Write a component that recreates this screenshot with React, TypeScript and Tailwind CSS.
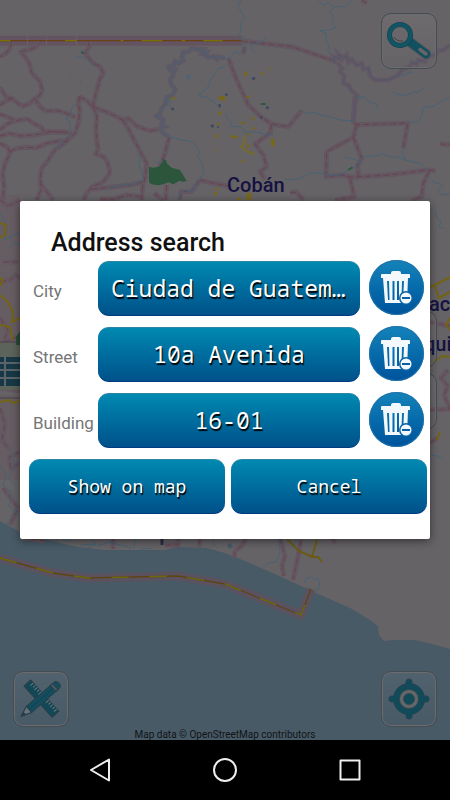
import React from "react";

/* Highways: drawn once as a wide soft casing and once as a dashed centre line. */
const northWestRoads = [
  "M0 408 L30 400 L60 408 L110 404 L150 396 L190 395 L215 400",
  "M35 123 L30 145 L18 160 L0 170",
  "M125 123 L110 138 L95 147 L62 155 L75 170 L88 190 L95 218 L120 245 L127 270 L118 288 L105 295 L90 310 L70 318 L55 312 L38 296 L20 292 L0 262",
  "M0 315 L20 302 L38 296",
  "M105 295 L118 318 L135 333 L170 332 L200 340 L225 352",
  "M0 342 L25 352 L45 362 L82 357 L105 372 L125 382 L130 393 L170 395 L200 398",
  "M0 390 L20 372 L45 362",
  "M0 430 L20 440 L30 455 L25 470 L15 490 L8 520 L12 560 L8 600",
  "M30 455 L50 445 L80 442 L110 443 L140 430 L180 422 L200 425 L170 445 L155 462 L145 480 L125 505 L120 535 L125 565 L110 600",
  "M120 550 L140 575 L160 600",
  "M238 290 L235 315 L240 330 L235 370 L225 400 L190 430",
  "M265 123 L268 140 L255 160 L280 190 L300 200 L310 220 L300 235 L288 280 L278 320",
  "M238 290 L260 302 L278 320 L330 340 L368 360 L385 355 L410 378 L450 393 L485 385",
  "M278 320 L290 345 L288 390 L290 425 L295 445 L287 462 L310 470 L322 485 L330 518 L310 545 L275 562 L260 580 L250 600",
  "M275 568 L330 562 L390 555 L435 545",
  "M368 360 L385 385 L405 425 L440 490 L436 530 L428 560 L425 600",
  "M508 410 L495 460 L480 500",
  "M500 555 L497 600",
  "M600 540 L640 550 L675 556",
  "M300 597 L340 598 L380 585 L430 590",
  "M462 580 L490 600",
  "M540 600 L542 575 L575 575 L600 540",
];

const northEastRoads = [
  "M50 123 L110 130 L200 140 L320 180",
  "M10 175 L35 240 L70 315 L105 348 L140 372 L190 380 L230 332",
  "M140 372 L135 400 L90 432 L115 465 L125 500 L105 515 L120 540",
  "M390 290 L385 365 L395 374 L548 370 L535 445",
  "M395 374 L385 412 L305 455 L303 530 L350 525 L380 532 L490 525 L610 510 L632 513",
  "M385 412 L410 475 L398 495 L400 530",
  "M375 535 L388 590 L330 600",
  "M612 515 L595 550 L590 590 L560 600",
  "M645 432 L675 434",
  "M0 555 L20 562 M195 577 L215 577 L235 600",
  "M60 140 L55 155 L62 160",
  "M410 0 L425 10",
];

const westBorderRiver =
  "M675 175 L655 170 L650 178 L640 168 L625 172 L615 165 L620 158 L605 160 L612 148 L590 148 L575 145 L565 155 L550 156 L545 172 L550 182 L535 190 L525 184 L522 195 L505 200 L512 212 L525 210 L518 228 L510 240 L515 255 L526 268 L518 285 L500 292 L498 310 L485 325 L480 340 L470 348 L490 358 L485 372 L495 380 L480 385 L490 400 L508 410";

const eastBorderRiver =
  "M675 135 L655 150 L640 152 L630 165 L610 170 L600 185 L580 180 L575 192 L560 188 L555 200 L530 210 L520 225 L490 240 L450 240 L435 228 L430 205 L415 208 L410 190 L395 196 L380 178 L370 187 L365 165 L355 175 L340 162 L345 178 L325 170 L330 185 L318 180 M340 190 L352 205 L345 215 L358 228 L355 250 L370 255 L380 272 L398 288 L388 315 L386 360";

const westRivers = [
  "M675 200 L655 205 L648 220 L632 238 L628 255 L615 272 L595 284 L610 292 L620 290 L635 302 L645 308 L655 320",
  "M508 410 L545 420 L575 425 L585 435 L600 455 L592 470 L605 490 L612 520 L595 540 L578 575 L555 570 L540 580 L536 600",
  "M228 172 L250 172 L262 180 L272 188 L280 200",
  "M238 148 L250 155 L245 162",
  "M228 310 L215 325 L212 345 L195 357 L208 362 L212 395 L200 410 L185 425 L180 440 L165 444",
  "M415 460 L420 478 L416 495 L425 515 L430 540 L410 550 L370 556 L335 560 L328 570",
  "M208 228 L212 234 M241 236 L242 245",
  "M470 485 L482 490",
  "M490 298 L512 300 L508 320 L518 327",
];

const eastRivers = [
  "M48 0 L38 18 L52 40 L60 55 L45 68 L50 90 L42 105 L58 112 L55 125 L60 145 L45 160 L28 155 L18 172 L0 178",
  "M125 108 L115 122 L100 130 L80 132 L78 148 L92 160",
  "M280 0 L295 15 L310 8 L328 20 L360 20 L380 0",
  "M328 20 L315 35 L325 50 L320 70 L335 82 L315 90 L285 92 L305 102 L302 120 L312 135 L308 155 L320 165",
  "M0 340 L8 358 L20 368 L15 378 L50 382 L60 398 L90 395 L120 402 L145 406",
  "M230 333 L245 340 L270 338 L290 345 L320 352 L345 360 L386 362",
  "M392 290 L420 292 L435 308 L452 310 L462 328",
  "M502 275 L520 284 L545 286 L565 276 L582 275 L600 262",
  "M675 293 L650 302 L630 318 L595 322 L590 350 L578 365 L548 368",
  "M515 228 L540 223 L555 215 L565 220",
  "M180 538 L215 538 L240 528 L260 518 L290 520 L320 526 L350 523 L380 505 L405 495 L395 480 L365 472 L355 470",
  "M400 490 L415 470 L445 468 L475 462 L495 470 L520 472 L540 480 L575 488 L590 490 L605 510",
  "M540 440 L530 462 L545 482",
  "M612 530 L632 550 L655 553 L640 570 L648 585 L675 582",
];

const coastRoads = [
  "M22 538 L45 541",
  "M113 538 L113 549",
  "M200 538 L199 547",
  "M246 538 L242 546 L235 551 L234 558",
  "M280 538 L285 556 L282 566 L284 576",
  "M301 540 L298 557 L293 580",
  "M331 538 L336 543",
  "M165 545 L178 545 L178 538",
];

const edgeRoads = [
  "M0 200 L8 206 L20 200",
  "M3 262 L18 262",
  "M0 282 L10 280 L16 275 L20 278",
  "M0 318 L8 330 L4 342 L20 336",
  "M0 388 L20 391",
  "M0 408 L5 424 L2 440 L10 450",
  "M20 452 L9 457 L11 469 L20 462",
  "M3 488 L12 500 L18 508 L10 525",
  "M430 322 L450 326",
  "M430 410 L450 409 L444 395 L448 386 L441 378 L448 370",
  "M430 443 L437 438",
];

const edgeRivers = [
  "M0 213 L7 226 L5 240 L20 232",
  "M8 250 L14 242 L20 245",
  "M0 466 L6 474 L3 486 L12 492 L9 506 L18 514",
  "M12 450 L14 468 L8 478 L16 486",
  "M3 540 L8 522 L18 508",
  "M435 210 L437 218 L441 222 L439 227 L444 228",
  "M430 455 L438 456 L443 460",
];

function Roads({ lines, scale }: { lines: string[]; scale: number }) {
  return (
    <g fill="none" strokeLinejoin="round">
      {lines.map((d) => (
        <path key={"c" + d} d={d} stroke="#635761" strokeWidth={5 * scale} />
      ))}
      {lines.map((d) => (
        <path
          key={"l" + d}
          d={d}
          stroke="#6a3c46"
          strokeWidth={scale * 0.8}
          strokeDasharray={`${6 * scale} ${3 * scale}`}
        />
      ))}
    </g>
  );
}

function Rivers({ lines, scale }: { lines: string[]; scale: number }) {
  return (
    <g fill="none" stroke="#466274" strokeWidth={scale} strokeLinejoin="round">
      {lines.map((d) => (
        <path key={d} d={d} />
      ))}
    </g>
  );
}

function MapCanvas() {
  return (
    <svg
      className="absolute inset-0 h-full w-full"
      viewBox="0 0 450 740"
      preserveAspectRatio="xMidYMid slice"
      aria-hidden="true"
    >
      <rect width="450" height="740" fill="#666366" />

      <g transform="scale(0.33333)">
        <path d="M0 122 H725" stroke="#645360" strokeWidth="30" />
        <Roads lines={northWestRoads} scale={3} />
        <path d={westBorderRiver} fill="none" stroke="#605864" strokeWidth="14" />
        <Rivers lines={[westBorderRiver, ...westRivers]} scale={3} />
        <path d="M0 122 H725" stroke="#6a4112" strokeWidth="4" />
        <path d="M0 122 H32 M195 122 H230 M362 122 H370 M425 122 H487 M545 122 H555 M610 122 H668" stroke="#777100" strokeWidth="4" />
        <path d="M82 107 V137 M139 107 V137 M230 107 V137" stroke="#716873" strokeWidth="2" />
        <path
          d="M447 501 L462 503 L478 499 L488 485 L488 476 L500 482 L500 490 L515 503 L540 510 L550 526 L560 543 L548 545 L538 542 L520 553 L505 547 L490 553 L475 556 L455 553 L447 547 Z"
          fill="#2b563b"
        />
        <circle cx="566" cy="231" r="7" fill="#4c6673" />
        <circle cx="247" cy="158" r="4" fill="#2d5a3d" />
        <g fill="#786713">
          <ellipse cx="519" cy="295" rx="6" ry="4" />
          <path d="M655 289 H675 V302 H665 V296 H655 Z" />
          <circle cx="661" cy="339" r="5" />
          <circle cx="651" cy="408" r="5" />
          <circle cx="653" cy="373" r="4" />
          <circle cx="648" cy="449" r="3" />
          <circle cx="651" cy="568" r="4" />
          <circle cx="646" cy="581" r="5" />
        </g>
        <g fill="#3e4862">
          <ellipse cx="518" cy="327" rx="5" ry="4" />
          <ellipse cx="659" cy="317" rx="4" ry="6" />
          <circle cx="637" cy="378" r="5" />
          <circle cx="654" cy="381" r="3" />
        </g>
      </g>

      <g transform="translate(225 0) scale(0.33333)">
        <Roads lines={northEastRoads} scale={3} />
        <path d={eastBorderRiver} fill="none" stroke="#635863" strokeWidth="14" />
        <path d={eastBorderRiver} fill="none" stroke="#50566a" strokeWidth="3" />
        <Rivers lines={eastRivers} scale={3} />
        <g fill="#786713">
          <ellipse cx="62" cy="221" rx="5" ry="7" />
          <circle cx="111" cy="220" r="4" />
          <circle cx="134" cy="206" r="3" />
          <ellipse cx="69" cy="290" rx="6" ry="3" />
          <path d="M78 348 L88 354 L90 360 L80 357 Z" />
          <ellipse cx="54" cy="369" rx="6" ry="4" />
          <circle cx="86" cy="385" r="4" />
          <ellipse cx="70" cy="403" rx="5" ry="3" />
          <path d="M16 405 L38 409 L36 415 L18 413 Z" />
          <path d="M138 418 L149 417 L148 438 L140 441 Z" />
          <circle cx="69" cy="438" r="5" />
          <circle cx="53" cy="483" r="4" />
          <path d="M66 578 H78 V600 H64 Z" />
          <ellipse cx="42" cy="597" rx="6" ry="4" />
        </g>
        <path d="M57 410 L60 425 L49 441 L62 452 L90 463" fill="none" stroke="#736a35" strokeWidth="7" />
        <g fill="#3e4862">
          <circle cx="86" cy="235" r="5" />
          <circle cx="127" cy="323" r="5" />
          <circle cx="109" cy="353" r="4" />
          <circle cx="4" cy="284" r="4" />
        </g>
        <path d="M107 312 H122 M370 510 L382 502" stroke="#2d5a3d" strokeWidth="6" />
      </g>

      {/* Strips of terrain on either side of the dialog */}
      <path d="M0 195 H20 V350 H0 Z M0 395 H20 V480 H0 Z" fill="#67545f" opacity="0.35" />
      <Roads lines={edgeRoads} scale={1} />
      <Rivers lines={edgeRivers} scale={1} />
      <path d="M0 343 H22 V390 H0 Z" fill="#5c6359" />
      <path d="M0 357 H20 V386 H0 Z" fill="#173847" />
      <path d="M0 363 H20 M0 370 H20 M0 378 H20 M5 355 V386" stroke="#5b6469" strokeWidth="2" />
      <path d="M16 337 L20 331 V345 H16 Z" fill="#254d35" />
      <path d="M0 342 H20 M0 398 H20" stroke="#454347" strokeWidth="1" />
      <g fill="none" stroke="#736313" strokeWidth="2">
        <path d="M0 223 L6 225 L5 235 L0 238" />
        <path d="M0 278 L3 280 L0 286 M0 295 L8 302 L13 312 L12 322 L20 318" />
        <path d="M0 325 L10 327 L13 340 M0 402 L8 400 L14 403 L20 401" />
        <path d="M430 287 L439 283 L450 277 M434 284 L439 298 L450 292" />
        <path d="M450 318 L446 325 L450 330 M433 363 L442 356 L450 357" />
      </g>
      <path d="M440 432 L437 440" stroke="#736313" strokeWidth="2" />

      <path
        d="M0 521 L20 532 L42 538 L60 543 L78 547 L105 550 L134 550 L165 550 L178 547 L207 548 L225 553 L250 563 L288 580 L318 594 L350 608 L367 618 L378 626 L379 635 L384 641 L393 640 L415 640 L432 644 L450 649 V740 H0 Z"
        fill="#485a66"
      />
      <Roads lines={coastRoads} scale={1} />
      <Rivers
        lines={[
          "M45 538 L51 543 M54 538 L58 542 M60 538 L66 541 L71 540",
          "M81 545 L96 544 L91 538 M96 544 L88 548 M97 546 L110 542 L120 545 L132 548 M135 538 L134 549 M141 549 L152 548",
          "M214 538 L213 544 L218 548",
          "M278 538 L280 552 L276 562 L268 563 L263 568",
          "M304 583 L306 579 L312 577 L315 580 L318 578 L320 587 L315 591",
          "M292 548 L297 539",
        ]}
        scale={1}
      />
      <path d="M162 538 V545" stroke="#272c42" strokeWidth="3" />
      <path d="M227 545 L231 543 L233 547 L229 549 Z" fill="#485a66" />
      <path d="M287 539 L299 551 L312 557 L318 557 L322 562 M312 557 L317 540" fill="none" stroke="#6b5b12" strokeWidth="2" />

      <g fill="none">
        <path
          d="M0 558 L53 573 L88 578 L178 576 L225 584 L301 615 L311 589"
          stroke="#5b5260"
          strokeWidth="9"
        />
        <path d="M0 558 L53 573 L88 578 L178 576 L225 584 L301 615 L311 589" stroke="#5f4413" strokeWidth="1.3" />
        <path
          d="M0 558 L53 573 L88 578 L178 576 L225 584 L301 615 L311 589"
          stroke="#6d6b09"
          strokeWidth="1.3"
          strokeDasharray="17 21"
        />
      </g>

      <g className="font-['Roboto',sans-serif] text-[20px] font-medium" fill="#151242">
        <text x="227" y="192">Cobán</text>
        <text x="429" y="311">ac</text>
        <text x="424" y="351">qui</text>
      </g>
    </svg>
  );
}

function MapButton({ label, children }: { label: string; children?: React.ReactNode }) {
  return (
    <button
      type="button"
      aria-label={label}
      className="size-14 shrink-0 rounded-[10px] border border-[#454d53] bg-linear-to-b from-white/5 to-white/0 shadow-[inset_0_0_0_1px_#6c6b6e]"
    >
      {children}
    </button>
  );
}

function SearchIcon() {
  return (
    <svg viewBox="0 0 56 56" className="-m-px size-14" aria-hidden="true">
      <path d="M29 29 L45 41" stroke="#46545a" strokeWidth="10" strokeLinecap="round" />
      <path d="M29 29 L45 41" stroke="#12505f" strokeWidth="8" strokeLinecap="round" />
      <path d="M39 36.500 L45 41" stroke="#676568" strokeWidth="3.500" strokeLinecap="round" />
      <circle cx="19" cy="22" r="10.500" fill="#69676a" stroke="#124552" strokeWidth="5" />
      <circle cx="19" cy="22" r="10.500" fill="none" stroke="#125565" strokeWidth="3.500" />
      <path d="M13 24 Q16 29 22 28" fill="none" stroke="#3d4143" strokeWidth="1" />
    </svg>
  );
}

function MeasureIcon() {
  return (
    <svg viewBox="0 0 56 56" className="-m-px size-14" aria-hidden="true">
      <g transform="rotate(48 28 28)" stroke="#273f48" strokeWidth="1">
        <rect x="7" y="23" width="42" height="9" fill="#124856" />
        <path d="M11 23 V27 M14 23 V26 M17 23 V27 M20 23 V26 M23 23 V27 M34 23 V27 M37 23 V26 M40 23 V27 M43 23 V26 M46 23 V27" stroke="#6b767b" />
      </g>
      <g transform="rotate(-41 28 28)" stroke="#28404a" strokeWidth="1">
        <path d="M12 24 H48 Q52 24 52 28 Q52 32 48 32 H12 L2 28 Z" fill="#124e5f" />
        <path d="M12 24 L2 28 L12 32 Z" fill="#68727a" />
        <path d="M6 26.500 L2 28 L6 29.500 Z" fill="#1c3037" />
        <path d="M44 24 H47 V32 H44 Z" fill="#4d5c64" />
        <path d="M12 28 H44" stroke="#19424f" />
      </g>
    </svg>
  );
}

function LocateIcon() {
  return (
    <svg viewBox="0 0 56 56" className="-m-px size-14" aria-hidden="true">
      <g fill="none" strokeLinecap="round">
        <path d="M28 11 V45 M11 28 H45" stroke="#33444d" strokeWidth="7" />
        <circle cx="28" cy="28" r="12.500" stroke="#33444d" strokeWidth="7" />
        <path d="M28 11 V45 M11 28 H45" stroke="#124a59" strokeWidth="5.500" />
        <circle cx="28" cy="28" r="12.500" stroke="#124a59" strokeWidth="6" />
      </g>
      <circle cx="28" cy="28" r="9.500" fill="#626769" stroke="#33444d" strokeWidth="0.700" />
      <circle cx="28" cy="28" r="5.500" fill="#124a59" stroke="#33444d" strokeWidth="0.700" />
    </svg>
  );
}

function TrashIcon() {
  return (
    <svg viewBox="0 0 55 55" className="size-[55px]" aria-hidden="true">
      <g fill="#f2f8fc">
        <path d="M22 13 Q22 11 24 11 H30 Q32 11 32 13 V14 H40 Q41 14 41 15 V18 H12 V15 Q12 14 13 14 H22 Z" />
        <path
          fillRule="evenodd"
          d="M14 18 H39 L38 43 H16 Z M18 21 L19 40 H20.500 L20 21 Z M23.500 21 V40 H25.500 V21 Z M28 21 V40 H30 V21 Z M33 21 L32.500 40 H34 L35 21 Z"
        />
      </g>
      <circle cx="37" cy="38" r="7" fill="#0b62a6" />
      <circle cx="37" cy="38" r="5.500" fill="#f2f8fc" />
      <path d="M33 38 H41" stroke="#0b5fa2" strokeWidth="2" />
    </svg>
  );
}

const blueButton =
  "h-[55px] min-w-0 rounded-[11px] border-t border-b border-t-[#2a86a5] border-b-[#003a80] bg-linear-to-b from-[#0089b1] to-[#00518a] font-['Noto_Sans_Mono','DejaVu_Sans_Mono',monospace] text-white [text-shadow:1px_2px_1px_#000]";

function AddressRow({ id, label, value }: { id: string; label: string; value: string }) {
  return (
    <div className="flex items-center">
      <label htmlFor={id} className="w-[69px] shrink-0 pt-1 pl-1 text-[17px] leading-6 whitespace-nowrap text-[#757575]">
        {label}
      </label>
      <button id={id} type="button" className={`${blueButton} flex-1 truncate px-[13px] text-[23px]`}>
        {value}
      </button>
      <button
        type="button"
        aria-label={`Clear ${label}`}
        className="mr-[3px] ml-[9px] size-[55px] shrink-0 -translate-y-px rounded-full bg-linear-to-b from-[#1583ba] to-[#00539b] shadow-[inset_0_0_1px_1px_#2173a8]"
      >
        <TrashIcon />
      </button>
    </div>
  );
}

function AddressDialog() {
  return (
    <section
      role="dialog"
      aria-labelledby="dialog-title"
      className="relative mx-5 w-full max-w-lg min-w-0 rounded-[2px] bg-white pr-[3px] pb-[25px] pl-[9px] shadow-[0_2px_8px_rgba(0,0,0,0.5)]"
    >
      <h1 id="dialog-title" className="pt-[26px] pb-0.5 pl-[22px] text-[25px] leading-8 font-medium text-[#111]">
        Address search
      </h1>
      <div className="flex flex-col gap-[11px]">
        <AddressRow id="city" label="City" value="Ciudad de Guatemala" />
        <AddressRow id="street" label="Street" value="10a Avenida" />
        <AddressRow id="building" label="Building" value="16-01" />
        <div className="flex gap-1.5">
          <button type="button" className={`${blueButton} flex-1 text-[18px]`}>
            Show on map
          </button>
          <button type="button" className={`${blueButton} flex-1 text-[18px]`}>
            Cancel
          </button>
        </div>
      </div>
    </section>
  );
}

export default function App() {
  return (
    <div className="flex h-screen flex-col bg-black font-['Roboto',sans-serif]">
      <main className="relative flex flex-1 items-center justify-center overflow-hidden">
        <MapCanvas />
        <div className="absolute inset-0 flex flex-col justify-between p-[13px]">
          <div className="flex justify-end">
            <MapButton label="Search">
              <SearchIcon />
            </MapButton>
          </div>
          <div className="flex flex-col items-end gap-1.5">
            <MapButton label="Zoom in" />
            <MapButton label="Zoom out" />
          </div>
          <div className="flex justify-between">
            <MapButton label="Measure">
              <MeasureIcon />
            </MapButton>
            <MapButton label="My location">
              <LocateIcon />
            </MapButton>
          </div>
        </div>
        <p className="absolute inset-x-0 bottom-0 text-center text-[10px] leading-[10px] text-[#101416]">
          Map data © OpenStreetMap contributors
        </p>
        <AddressDialog />
      </main>

      <nav className="flex h-15 shrink-0 items-center justify-center gap-[97px] bg-black">
        <button type="button" aria-label="Back">
          <svg viewBox="0 0 28 28" className="size-7" fill="none" stroke="#eee" strokeWidth="2" strokeLinejoin="round" aria-hidden="true">
            <path d="M5 14 L23 3.500 V24.500 Z" />
          </svg>
        </button>
        <button type="button" aria-label="Home">
          <svg viewBox="0 0 28 28" className="size-7" fill="none" stroke="#eee" strokeWidth="2" aria-hidden="true">
            <circle cx="14" cy="14" r="11" />
          </svg>
        </button>
        <button type="button" aria-label="Recent apps">
          <svg viewBox="0 0 28 28" className="size-7" fill="none" stroke="#eee" strokeWidth="2" strokeLinejoin="round" aria-hidden="true">
            <rect x="4.500" y="4.500" width="19" height="19" />
          </svg>
        </button>
      </nav>
    </div>
  );
}
